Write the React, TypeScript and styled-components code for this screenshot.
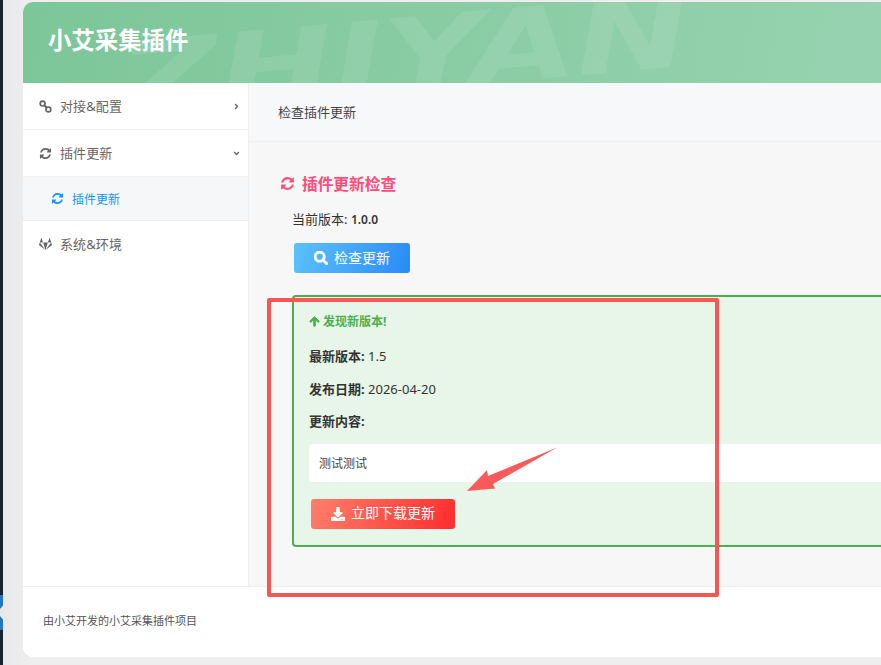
import styled, { createGlobalStyle } from "styled-components";
import {
  FaAngleDown,
  FaAngleRight,
  FaArrowUp,
  FaDownload,
  FaGitlab,
  FaSearch,
} from "react-icons/fa";

const GlobalStyle = createGlobalStyle`
  html, body {
    margin: 0;
    padding: 0;
    background: #eeeeee;
  }
  body {
    width: 881px;
    height: 665px;
    overflow: hidden;
    font-family: "Noto Sans", "Noto Sans CJK SC", sans-serif;
    font-size: 12px;
    color: #333;
  }
`;

// the old font-awesome refresh glyph, react-icons only has the thinner one
function RefreshIcon({ size }: { size: number }) {
  return (
    <svg width={size} height={size} viewBox="0 0 1792 1792" fill="currentColor">
      <path d="M1639 1056q0 5-1 7-64 268-268 434.5t-478 166.5q-146 0-282.5-55t-243.5-157l-129 129q-19 19-45 19t-45-19-19-45v-448q0-26 19-45t45-19h448q26 0 45 19t19 45-19 45l-137 137q71 66 161 102t187 36q134 0 250-65t186-179q11-17 53-117 8-23 30-23h192q13 0 22.5 9.5t9.5 22.5zm25-800v448q0 26-19 45t-45 19h-448q-26 0-45-19t-19-45 19-45l138-138q-148-137-349-137-134 0-250 65t-186 179q-11 17-53 117-8 23-30 23h-199q-13 0-22.5-9.5t-9.5-22.5v-7q65-268 270-434.5t480-166.5q146 0 284 55.5t245 156.5l130-129q19-19 45-19t45 19 19 45z" />
    </svg>
  );
}

function ChainIcon() {
  return (
    <svg width="13" height="13" viewBox="0 0 13 13" fill="none" stroke="currentColor">
      <circle cx="3.6" cy="3.6" r="2.4" strokeWidth="1.7" />
      <circle cx="9.4" cy="9.4" r="2.4" strokeWidth="1.7" />
      <path d="M4.8 4.8 L8.2 8.2" strokeWidth="2" />
    </svg>
  );
}

export default function App() {
  return (
    <Page>
      <GlobalStyle />
      <WindowEdge>
        <EdgeTab />
      </WindowEdge>
      <Card>
        <Header>
          <Watermark>ZHIYAN</Watermark>
          <Title>小艾采集插件</Title>
        </Header>
        <Body>
          <Sidebar>
            <MenuItem>
              <MenuIcon>
                <ChainIcon />
              </MenuIcon>
              <MenuLabel>对接&amp;配置</MenuLabel>
              <FaAngleRight size={9} />
            </MenuItem>
            <MenuItem>
              <MenuIcon>
                <RefreshIcon size={13} />
              </MenuIcon>
              <MenuLabel>插件更新</MenuLabel>
              <FaAngleDown size={9} />
            </MenuItem>
            <SubItem>
              <RefreshIcon size={13} />
              <span>插件更新</span>
            </SubItem>
            <MenuItem>
              <MenuIcon>
                <FaGitlab size={14} />
              </MenuIcon>
              <MenuLabel>系统&amp;环境</MenuLabel>
            </MenuItem>
          </Sidebar>
          <Main>
            <TitleBar>检查插件更新</TitleBar>
            <Content>
              <Heading>
                <RefreshIcon size={15} />
                <span>插件更新检查</span>
              </Heading>
              <CurrentVersion>
                当前版本: <b>1.0.0</b>
              </CurrentVersion>
              <CheckButton>
                <FaSearch size={14} stroke="currentColor" strokeWidth={24} />
                <span>检查更新</span>
              </CheckButton>
              <UpdateBox>
                <Found>
                  <FaArrowUp size={11} stroke="currentColor" strokeWidth={40} />
                  <span>发现新版本!</span>
                </Found>
                <InfoLine>
                  <b>最新版本:</b> 1.5
                </InfoLine>
                <InfoLine>
                  <b>发布日期:</b> 2026-04-20
                </InfoLine>
                <InfoLine>
                  <b>更新内容:</b>
                </InfoLine>
                <Notes>测试测试</Notes>
                <DownloadButton>
                  <FaDownload size={14} />
                  <span>立即下载更新</span>
                </DownloadButton>
              </UpdateBox>
            </Content>
          </Main>
        </Body>
        <Footer>由小艾开发的小艾采集插件项目</Footer>
      </Card>
      <Highlight />
      <Arrow width="96" height="50" viewBox="0 0 96 50">
        <path d="M91 0.5 L27 37 L29 41.5 L1 44 L21 23 L22 29 Z" fill="#fa5a5a" />
      </Arrow>
    </Page>
  );
}

const Page = styled.div`
  position: relative;
  display: flex;
  width: 881px;
  height: 665px;
  overflow: hidden;
  background: linear-gradient(90deg, #e8e8e8 0, #eeeeee 30px);
`;

const WindowEdge = styled.div`
  flex: 0 0 3px;
  height: 100%;
  padding-top: 595px;
  box-sizing: border-box;
  background: #1b252d;
`;

const EdgeTab = styled.div`
  height: 35px;
  background: #e8e8e8;

  &::before {
    content: "";
    display: block;
    height: 100%;
    background: #2378bd;
    clip-path: polygon(0 0, 100% 0, 100% 30%, 0 40%, 0 60%, 100% 70%, 100% 100%, 0 100%);
  }
`;

const Card = styled.div`
  flex: 0 0 1000px;
  display: flex;
  flex-direction: column;
  height: 655px;
  margin: 2px 0 0 20px;
  border-radius: 10px;
  overflow: hidden;
  background: #fff;
`;

const Header = styled.header`
  position: relative;
  flex: 0 0 81px;
  display: flex;
  align-items: center;
  padding: 0 25px;
  overflow: hidden;
  background: linear-gradient(100deg, #7cc699 0%, #9bd4b3 100%);
`;

const Watermark = styled.div`
  position: absolute;
  left: 97px;
  top: 24px;
  font-family: "DejaVu Sans", sans-serif;
  font-size: 100px;
  font-weight: 700;
  font-style: italic;
  line-height: 110px;
  color: rgba(255, 255, 255, 0.09);
  transform: rotate(-5deg) scaleX(1.37);
  transform-origin: left center;
`;

const Title = styled.h1`
  position: relative;
  margin: 0 0 7px;
  font-size: 23.4px;
  font-weight: 700;
  color: #fff;
`;

const Body = styled.div`
  flex: 1;
  display: flex;
  min-height: 0;
`;

const Sidebar = styled.nav`
  flex: 0 0 225px;
  border-right: 1px solid #eeeeee;
  background: #fff;
`;

const MenuItem = styled.div`
  display: flex;
  align-items: center;
  height: 46px;
  padding: 0 7px 0 16px;
  border-bottom: 1px solid #f2f2f2;
  color: #666;
  font-size: 13px;

  &:last-child {
    border-bottom: 0;
  }
`;

const MenuIcon = styled.span`
  display: flex;
  justify-content: center;
  width: 13px;
  margin-right: 8px;
`;

const MenuLabel = styled.span`
  flex: 1;
  padding-bottom: 2px;
  letter-spacing: 0.1px;
`;

const SubItem = styled.div`
  display: flex;
  align-items: center;
  gap: 8px;
  height: 43px;
  padding-left: 28px;
  border-bottom: 1px solid #eeeeee;
  background: #f6f7f9;
  color: #1296f3;
  font-size: 12px;
`;

const Main = styled.main`
  flex: 1;
  display: flex;
  flex-direction: column;
  background: #f7f7f7;
`;

const TitleBar = styled.div`
  display: flex;
  align-items: center;
  height: 56px;
  padding: 0 0 2px 29px;
  border-bottom: 1px solid #eeeff1;
  background: #f7f8fa;
  color: #444;
  font-size: 13px;
`;

const Content = styled.div`
  padding: 28px 0 0 43px;
`;

const Heading = styled.h2`
  display: flex;
  align-items: center;
  gap: 7px;
  height: 26px;
  margin: 0 0 0 -12px;
  color: #ff4d79;
  font-size: 15.7px;
  font-weight: 700;
`;

const CurrentVersion = styled.p`
  height: 18px;
  margin: 14px 0 0;
  line-height: 18px;
  font-size: 13px;
  color: #333;

  b {
    font-size: 12px;
    font-weight: 600;
  }
`;

const GradientButton = styled.button`
  display: inline-flex;
  align-items: center;
  justify-content: center;
  height: 30px;
  padding: 0;
  border: 0;
  border-radius: 3px;
  color: #fff;
  font-family: inherit;
  font-size: 14px;

  span {
    margin-top: -3px;
  }
`;

const CheckButton = styled(GradientButton)`
  gap: 6px;
  width: 116px;
  margin: 15px 0 0 2px;
  background: linear-gradient(110deg, #5cc2fd 0%, #2a8af6 100%);
`;

const UpdateBox = styled.section`
  box-sizing: border-box;
  width: 700px;
  height: 252px;
  margin-top: 22px;
  padding: 14px 15px 0;
  border: 2px solid #4caf50;
  border-radius: 4px;
  background: #e8f5e9;
`;

const Found = styled.div`
  display: flex;
  align-items: center;
  gap: 3px;
  height: 20px;
  color: #4caf50;
  font-size: 12px;
  font-weight: 700;
`;

const InfoLine = styled.p`
  height: 18px;
  margin: 0 0 14.5px;
  line-height: 18px;
  font-size: 13px;
  color: #333;

  ${Found} + & {
    margin-top: 16px;
  }
`;

const Notes = styled.div`
  display: flex;
  align-items: center;
  height: 38px;
  margin-top: -1px;
  padding-left: 10px;
  border-radius: 3px;
  background: #fff;
  color: #444;
  font-size: 12px;
`;

const DownloadButton = styled(GradientButton)`
  gap: 6px;
  width: 144px;
  margin: 17px 0 0 2px;
  background: linear-gradient(110deg, #ff7f6b 0%, #ff2d2d 100%);
`;

const Footer = styled.footer`
  display: flex;
  align-items: center;
  flex: 0 0 71px;
  padding: 0 0 4px 20px;
  box-sizing: border-box;
  border-top: 1px solid #eeeeee;
  background: #fff;
  color: #555;
  font-size: 11px;
`;

const Highlight = styled.div`
  position: absolute;
  left: 267px;
  top: 298px;
  box-sizing: border-box;
  width: 452px;
  height: 299px;
  border: 4px solid #fa5555;
  border-radius: 2px;
`;

const Arrow = styled.svg`
  position: absolute;
  left: 466px;
  top: 447px;
`;
